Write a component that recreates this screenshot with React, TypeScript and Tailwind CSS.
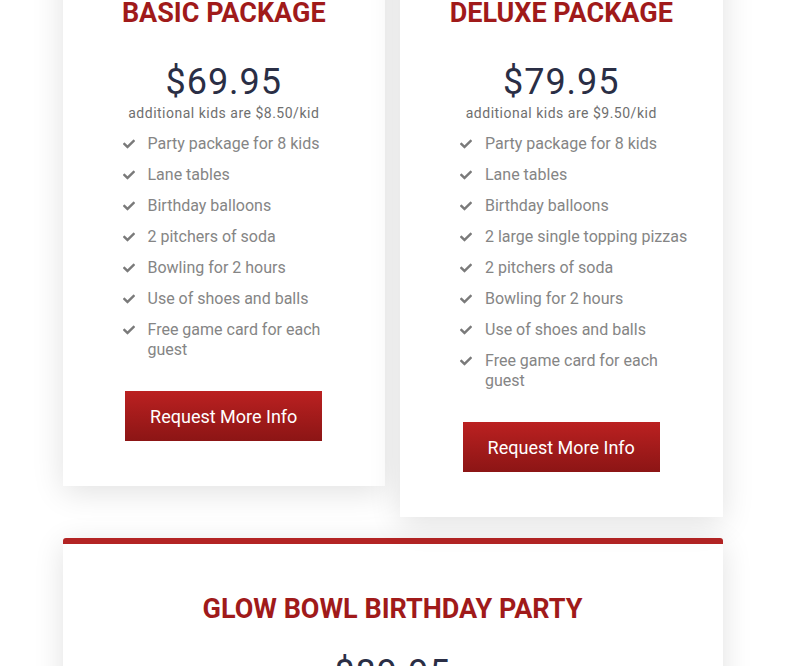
import { FaCheck } from "react-icons/fa";

type Pkg = {
  name: string;
  price: string;
  extra: string;
  items: string[];
};

const packages: Pkg[] = [
  {
    name: "BASIC PACKAGE",
    price: "$69.95",
    extra: "additional kids are $8.50/kid",
    items: [
      "Party package for 8 kids",
      "Lane tables",
      "Birthday balloons",
      "2 pitchers of soda",
      "Bowling for 2 hours",
      "Use of shoes and balls",
      "Free game card for each guest",
    ],
  },
  {
    name: "DELUXE PACKAGE",
    price: "$79.95",
    extra: "additional kids are $9.50/kid",
    items: [
      "Party package for 8 kids",
      "Lane tables",
      "Birthday balloons",
      "2 large single topping pizzas",
      "2 pitchers of soda",
      "Bowling for 2 hours",
      "Use of shoes and balls",
      "Free game card for each guest",
    ],
  },
];

function PackageCard({ pkg }: { pkg: Pkg }) {
  return (
    <div className="flex flex-col items-center bg-white pt-[40px] pb-[45px] shadow-[0_6px_30px_rgba(0,0,0,0.12)]">
      <h2 className="text-[27px] leading-[30px] font-bold text-[#a01a1a]">{pkg.name}</h2>
      <p className="mt-[35px] text-[36px] leading-[38px] tracking-[1px] text-[#2a2e45]">{pkg.price}</p>
      <p className="mt-[2px] text-[14px] leading-[20px] tracking-[0.5px] text-[#6f6f6f]">{pkg.extra}</p>
      <ul className="mt-[11px] flex w-full flex-col gap-[11px] pl-[59px] pr-[30px]">
        {pkg.items.map((item) => (
          <li key={item} className="flex items-start gap-[13px] text-[16px] leading-[20px] text-[#858585]">
            <FaCheck className="mt-[4px] ml-[1px] h-[12px] w-[12px] shrink-0 text-[#7a7a7a]" />
            <span>{item}</span>
          </li>
        ))}
      </ul>
      <button className="mt-[31px] h-[50px] w-[197px] bg-gradient-to-b from-[#bb2121] to-[#8c1515] text-[18px] text-white">
        Request More Info
      </button>
    </div>
  );
}

export default function App() {
  return (
    <div className="h-[666px] overflow-hidden bg-white font-['Roboto',sans-serif]">
      <div className="mx-auto -mt-[42px] w-[660px]">
        <div className="grid grid-cols-2 items-start gap-[15px]">
          {packages.map((pkg) => (
            <PackageCard key={pkg.name} pkg={pkg} />
          ))}
        </div>
        <div className="mt-[21px] flex flex-col items-center rounded-t-[3px] border-t-[6px] border-[#b32424] bg-white pt-[50px] pb-[60px] shadow-[0_6px_30px_rgba(0,0,0,0.12)]">
          <h2 className="text-[27px] leading-[30px] font-bold text-[#a01a1a]">GLOW BOWL BIRTHDAY PARTY</h2>
          <p className="mt-[30px] text-[36px] leading-[38px] tracking-[1px] text-[#2a2e45]">$89.95</p>
        </div>
      </div>
    </div>
  );
}
